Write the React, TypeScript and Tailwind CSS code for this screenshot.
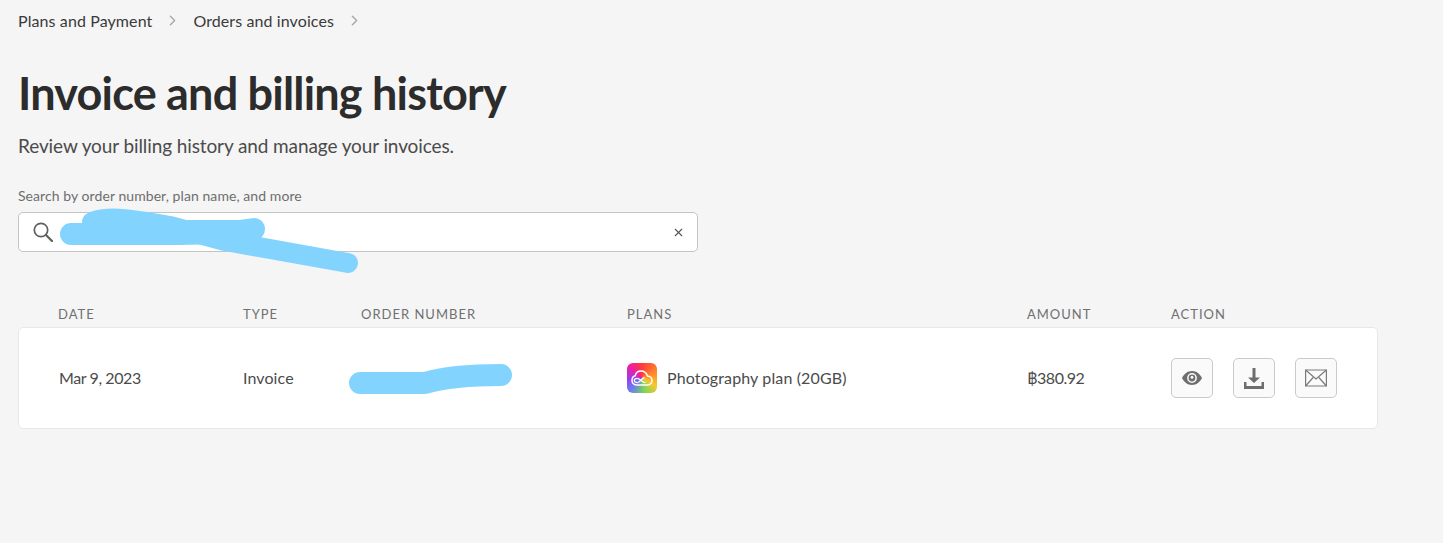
import { ChevronRight, X } from "lucide-react";

const font = "font-['Lato','Open_Sans',sans-serif]";

function Crumb({ label }: { label: string }) {
  return (
    <>
      <span className="text-[16px] tracking-[0.1px] text-[#3a3a3a]">{label}</span>
      <ChevronRight className="w-[17px] h-[17px] text-[#a8a8a8] mx-[12px]" strokeWidth={2} />
    </>
  );
}

function HeaderCell({ label }: { label: string }) {
  return <div className="text-[13px] tracking-[1px] text-[#707070] uppercase">{label}</div>;
}

function ActionButton({ children }: { children: React.ReactNode }) {
  return (
    <button className="w-[42px] h-[40px] flex items-center justify-center rounded-[5px] border border-[#cacaca] bg-[#fafafa]">
      {children}
    </button>
  );
}

function CloudLogo() {
  return (
    <div className="w-[30px] h-[30px] rounded-[6px] flex items-center justify-center bg-[conic-gradient(from_0deg_at_50%_50%,#ff3a3a_0deg,#ff8a2a_70deg,#f6c82e_120deg,#7ad65a_170deg,#6a7cf0_225deg,#9a3cf0_265deg,#f01ea0_315deg,#ff3a3a_360deg)]">
      <svg width="22" height="16" viewBox="0 0 22 16" fill="none" stroke="#ffffff">
        <path strokeWidth="1.5" d="M6 15H16C19 15 21 13 21 10.500C21 8 19 6 16.500 6C15.500 3 13 1 10 1C7 1 4.800 3 4.200 5.800C2.200 6.300 1 8.300 1 10.500C1 13 3 15 6 15Z" />
        <path strokeWidth="1.3" d="M6.200 12.600C4.500 12.600 3.300 11.700 3.300 10.500C3.300 9.200 4.500 8.300 6.200 8.300C9.200 8.300 10.500 12.600 14.500 12.600" />
        <path strokeWidth="1.3" d="M6.200 12.600C9 12.600 10.500 8.200 13.500 7.500" />
      </svg>
    </div>
  );
}

export default function App() {
  return (
    <div className={`relative h-[543px] w-full overflow-hidden bg-[#f5f5f5] px-[18px] ${font}`}>
      <nav className="flex items-center h-[21px] mt-[10px]">
        <Crumb label="Plans and Payment" />
        <Crumb label="Orders and invoices" />
      </nav>

      <h1 className="mt-[31px] text-[45px] leading-[62px] font-bold tracking-[-0.8px] text-[#2c2c2c]">
        Invoice and billing history
      </h1>
      <p className="mt-[9px] text-[19px] leading-[26px] tracking-[-0.1px] text-[#4b4b4b]">
        Review your billing history and manage your invoices.
      </p>

      <label className="block mt-[27px] text-[14px] leading-[20px] tracking-[0.07px] text-[#6e6e6e]">
        Search by order number, plan name, and more
      </label>
      <div className="mt-[6px] flex items-center justify-between w-[680px] h-[40px] pl-[14px] pr-[12px] bg-white border border-[#c4c4c4] rounded-[5px]">
        <svg width="20" height="20" viewBox="0 0 20 20" fill="none" stroke="#5f5f5f" strokeWidth="1.700" strokeLinecap="round">
          <circle cx="8" cy="8" r="6.700" />
          <path strokeWidth="2.200" d="M13 13L19 19" />
        </svg>
        <X className="w-[13px] h-[13px] text-[#555555]" strokeWidth={2} />
      </div>

      <div className="mt-[53px] w-[1360px]">
        <div className="grid grid-cols-[185px_118px_266px_400px_144px_1fr] pl-[40px] h-[20px] items-center">
          <HeaderCell label="Date" />
          <HeaderCell label="Type" />
          <HeaderCell label="Order number" />
          <HeaderCell label="Plans" />
          <HeaderCell label="Amount" />
          <HeaderCell label="Action" />
        </div>
        <div className="mt-[2px] grid grid-cols-[185px_118px_266px_400px_144px_1fr] items-center pl-[39px] h-[102px] bg-white border border-[#e8e8e8] rounded-[5px] text-[16px] text-[#4b4b4b]">
          <div className="pl-[1px] tracking-[-0.4px]">Mar 9, 2023</div>
          <div className="tracking-[0.1px]">Invoice</div>
          <div />
          <div className="flex items-center gap-[10px]">
            <CloudLogo />
            <span className="tracking-[0.13px]">Photography plan (20GB)</span>
          </div>
          <div className="tracking-[-0.5px]">฿380.92</div>
          <div className="flex gap-[20px]">
            <ActionButton>
              <svg width="20" height="14" viewBox="0 0 20 14" fill="#6e6e6e">
                <path fillRule="evenodd" d="M10 0C5.600 0 2 2.800 0 7c2 4.200 5.600 7 10 7s8-2.800 10-7c-2-4.200-5.600-7-10-7Zm0 2.100A4.900 4.900 0 1 1 10 11.900 4.900 4.900 0 0 1 10 2.100Z" />
                <path fillRule="evenodd" d="M10 3.600a3.400 3.400 0 1 0 0 6.800 3.400 3.400 0 0 0 0-6.800Zm0 1.200a1.500 1.500 0 1 1 0 3 1.500 1.500 0 0 1 0-3Z" />
              </svg>
            </ActionButton>
            <ActionButton>
              <svg width="20" height="21" viewBox="0 0 20 21" fill="#6e6e6e">
                <path d="M8.500 0h3v9.500h4.500l-6 5.500-6-5.500h4.500Z" />
                <path d="M0 14h2.500v4h15v-4h2.500v7H0Z" />
              </svg>
            </ActionButton>
            <ActionButton>
              <svg width="22" height="18" viewBox="0 0 22 18" fill="none" stroke="#7a7a7a" strokeWidth="1.200">
                <path d="M0.600 1h20.800v16H0.600Z" />
                <path d="M0.600 1 11 10 21.400 1M0.600 17l7.500-8.500M21.400 17l-7.500-8.500" />
              </svg>
            </ActionButton>
          </div>
        </div>
      </div>

      {/* marker scribbles over the search text and the order number */}
      <svg className="absolute left-0 top-0 pointer-events-none" width="1443" height="543" fill="none" stroke="#82d4ff" strokeLinecap="round" strokeLinejoin="round">
        <path d="M71 234H180C205 234 235 232 254 229" strokeWidth="22" />
        <path d="M178 231H250" strokeWidth="22" />
        <path d="M92 222C110 215 135 220 170 226L225 241L348 263" strokeWidth="20" />
        <path d="M360 383H425C445 377 470 375 501 375" strokeWidth="22" />
      </svg>
    </div>
  );
}
